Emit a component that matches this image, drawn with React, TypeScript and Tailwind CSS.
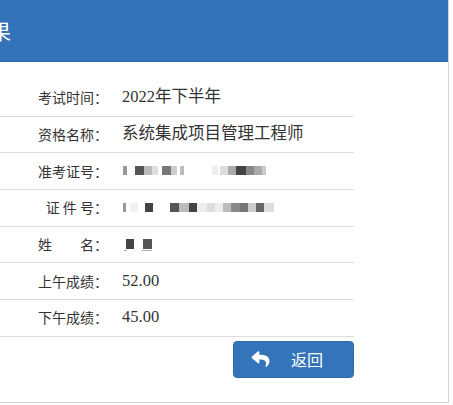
import React from "react";
import { FaReply } from "react-icons/fa";

const blocks1: [number, number, string][] = [
  [1, 4, "#999"], [13, 9, "#555"], [22, 8, "#bbb"], [30, 6, "#ddd"], [40, 9, "#777"], [49, 6, "#ccc"], [58, 4, "#bbb"],
  [90, 6, "#eee"], [98, 8, "#ddd"], [106, 8, "#aaa"], [114, 10, "#444"], [124, 8, "#888"], [132, 8, "#aaa"], [140, 4, "#ccc"],
];
const blocks2: [number, number, string][] = [
  [1, 3, "#999"], [8, 8, "#f0f0f0"], [23, 8, "#444"], [48, 9, "#555"], [57, 10, "#bbb"], [67, 8, "#444"], [75, 10, "#eee"],
  [85, 8, "#ddd"], [93, 8, "#eee"], [101, 8, "#bbb"], [109, 9, "#888"], [118, 8, "#777"], [126, 8, "#ccc"], [134, 8, "#666"], [142, 10, "#ddd"],
];

function Pix({ blocks, w }: { blocks: [number, number, string][]; w: number }) {
  return (
    <svg width={w} height={14} viewBox={`0 0 ${w} 14`}>
      {blocks.map(([x, bw, c], i) => (
        <rect key={i} x={x} y={2} width={bw} height={9} fill={c} />
      ))}
    </svg>
  );
}

export default function App() {
  const rows: { label: string; value: React.ReactNode }[] = [
    { label: "考试时间：", value: "2022年下半年" },
    { label: "资格名称：", value: "系统集成项目管理工程师" },
    { label: "准考证号：", value: <Pix blocks={blocks1} w={146} /> },
    { label: "证 件 号：", value: <Pix blocks={blocks2} w={156} /> },
    {
      label: "姓\u3000\u3000名：",
      value: (
        <svg width={34} height={16} viewBox="0 0 34 16">
          <rect x={4} y={3} width={8} height={10} fill="#444" />
          <rect x={21} y={3} width={9} height={10} fill="#555" />
          <rect x={2} y={14} width={3} height={1} fill="#aaa" />
          <rect x={20} y={14} width={10} height={1} fill="#aaa" />
        </svg>
      ),
    },
    { label: "上午成绩：", value: "52.00" },
    { label: "下午成绩：", value: "45.00" },
  ];
  return (
    <div className="w-[453px] h-[405px] bg-white overflow-hidden">
      <div className="w-[449px] h-[403px] border-r border-b border-[#d4d4d4] flex flex-col">
        <div className="h-[62px] bg-[#3373ba] border-b border-[#2d68a8] flex items-center shrink-0">
          <span
            className="-ml-[10px] text-white text-[21px] leading-none"
            style={{ fontFamily: '"Noto Sans CJK SC", sans-serif' }}
          >
            果
          </span>
        </div>
        <div className="w-[354px] mt-[18px] flex flex-col">
          {rows.map((r, i) => (
            <div key={i} className="h-[36.67px] border-b border-[#dddddd] flex items-center">
              <div
                className="w-[108px] text-right text-[14px] text-[#333] whitespace-pre"
                style={{ fontFamily: '"Noto Sans CJK SC", sans-serif' }}
              >
                {r.label}
              </div>
              <div
                className="ml-[14px] text-[16.5px] text-[#333] flex items-center"
                style={{ fontFamily: '"Liberation Serif", "Noto Sans CJK SC", serif' }}
              >
                {r.value}
              </div>
            </div>
          ))}
          <div className="flex justify-end mt-[4px]">
            <button className="w-[121px] h-[37px] bg-[#3374bb] border border-[#2e6da4] rounded-[4px] flex items-center text-white">
              <FaReply className="ml-[15px] w-[23px] h-[18px]" />
              <span
                className="ml-[19px] text-[16px]"
                style={{ fontFamily: '"Noto Sans CJK SC", sans-serif' }}
              >
                返回
              </span>
            </button>
          </div>
        </div>
      </div>
    </div>
  );
}
